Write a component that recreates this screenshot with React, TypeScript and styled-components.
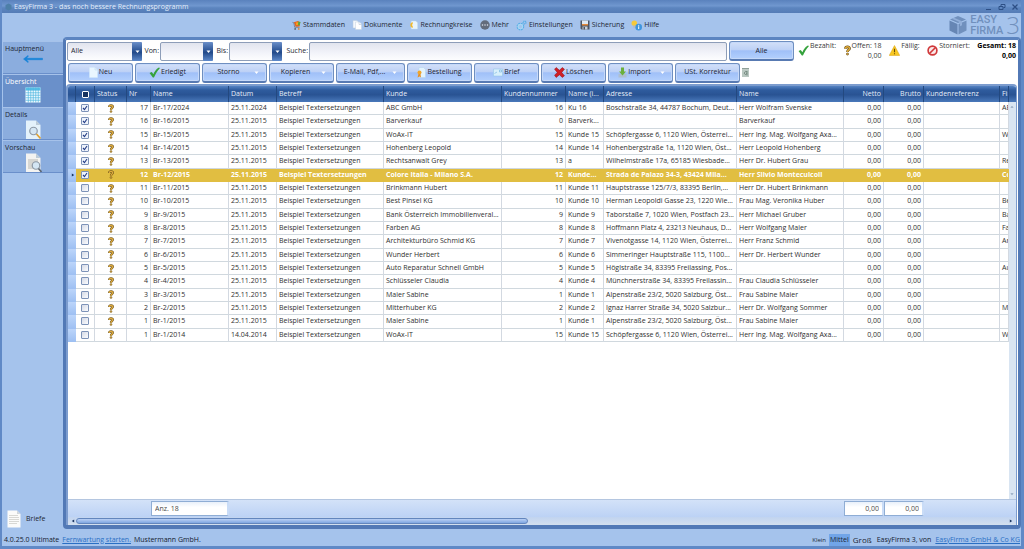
import React, { useState } from "react";
import styled, { createGlobalStyle, css } from "styled-components";

const GlobalStyle = createGlobalStyle`
  *, *::before, *::after { box-sizing: border-box; }
  body { margin: 0; }
  body, button, input, select {
    font-family: "Open Sans", "Noto Sans", sans-serif;
    font-size: 7px;
    line-height: 10px;
    color: #1d2733;
  }
`;

const Frame = styled.div`
  min-height: 100vh;
  display: flex;
  flex-direction: column;
  background: #a5c3ec;
  border: solid #6089c6;
  border-width: 0 3px 3px 2px;
`;

const TitleBar = styled.header`
  height: 13px;
  display: flex;
  align-items: center;
  justify-content: space-between;
  padding: 0 2px 0 3px;
  color: #e3edfa;
  background: linear-gradient(#5a82bd, #7097cf 45%, #5c85bf 60%, #557cb6);
`;

const TitleText = styled.div`
  display: flex;
  align-items: center;
  gap: 2px;
`;

const WindowButtons = styled.div`
  display: flex;
  gap: 5px;
`;

const WindowButton = styled.button`
  width: 8px;
  height: 8px;
  padding: 0;
  border: 0;
  background: none;
  display: flex;
`;

const Header = styled.div`
  height: 24px;
  display: flex;
  align-items: center;
`;

const Nav = styled.nav`
  flex: 1;
  display: flex;
  justify-content: center;
  gap: 7px;
`;

const NavLink = styled.a`
  display: flex;
  align-items: center;
  gap: 2px;
  color: inherit;
  text-decoration: none;
`;

const Brand = styled.div`
  display: flex;
  align-items: center;
  gap: 3px;
  padding-right: 1px;
  color: #7090bd;
  font-family: Roboto, sans-serif;
  font-weight: 500;
  font-size: 11px;
  line-height: 11px;
`;

const BrandNumber = styled.span`
  font-family: "Open Sans", sans-serif;
  font-weight: 300;
  font-size: 24px;
  line-height: 22px;
`;

const Body = styled.div`
  flex: 1;
  display: flex;
`;

const Sidebar = styled.aside`
  width: 61px;
  padding: 4px 0 0 1px;
  display: flex;
  flex-direction: column;
`;

const SideTab = styled.button<{ $active?: boolean }>`
  height: 33px;
  padding: 2px 2px 0;
  border: 0;
  border-bottom: 1px solid #6a8fca;
  border-top: 1px solid #a6c2ea;
  background: ${(p) => (p.$active ? "#6a90ca" : "#8badde")};
  color: ${(p) => (p.$active ? "#ffffff" : "#1d2733")};
  text-align: left;
  display: flex;
  flex-direction: column;
  svg { align-self: center; flex: none; }
`;

const LettersButton = styled.button`
  margin-top: auto;
  height: 20px;
  padding: 0 4px;
  border: 0;
  background: none;
  display: flex;
  align-items: center;
  gap: 5px;
`;

const Panel = styled.main`
  flex: 1;
  min-width: 0;
  display: flex;
  flex-direction: column;
  background: #fff;
  border: 3px solid #5279b6;
  border-top-color: #5c85c1;
  border-bottom-width: 4px;
  border-radius: 4px;
`;

const FilterRow = styled.div`
  display: flex;
  align-items: center;
  height: 22px;
  padding: 1px 2px 1px 1px;
`;

const field = css`
  height: 19px;
  border: 1px solid #8d9db8;
  border-radius: 2px;
  background: linear-gradient(#e1e4ee, #f3f4fa 60%, #fdfdfe);
  padding: 0 3px;
  outline: none;
`;

const Combo = styled.div<{ $w: number }>`
  position: relative;
  display: flex;
  width: ${(p) => p.$w}px;
  flex: none;
`;

const ComboSelect = styled.select`
  ${field}
  appearance: none;
  width: 100%;
  padding-right: 12px;
`;

const ComboInput = styled.input`
  ${field}
  width: 100%;
  padding-right: 12px;
`;

const ComboArrow = styled.span`
  position: absolute;
  right: 0;
  top: 0;
  width: 10px;
  height: 19px;
  display: flex;
  align-items: center;
  justify-content: center;
  pointer-events: none;
  border-radius: 1px;
  background: linear-gradient(#6b8fc9, #2d5596 45%, #234a8a 55%, #5f8acb);
`;

const FieldLabel = styled.label<{ $w: number }>`
  width: ${(p) => p.$w}px;
  flex: none;
  text-align: right;
  padding-right: 1px;
`;

const SearchInput = styled.input`
  ${field}
  flex: 1;
  min-width: 40px;
  margin-right: 2px;
`;

const GlossButton = styled.button<{ $w?: number }>`
  width: ${(p) => p.$w ?? 65}px;
  height: 20px;
  flex: none;
  padding: 0;
  border: 1px solid #6f8fc0;
  border-bottom: 2px solid #587ab2;
  border-radius: 3px;
  background: linear-gradient(#d3e0f8, #bdd1f6 45%, #a0c0f8 52%, #b3d0fd);
  box-shadow: inset 0 0 0 1px #c6d9f9;
  display: flex;
  align-items: center;
  color: #1a2433;
`;

const ButtonContent = styled.span`
  flex: 1;
  display: flex;
  align-items: center;
  justify-content: center;
  gap: 1px;
  white-space: nowrap;
`;

const Caret = styled.span`
  width: 12px;
  display: flex;
`;

const Stats = styled.div`
  display: flex;
  flex: none;
  width: 222px;
  padding-left: 4px;
  justify-content: space-between;
`;

const Stat = styled.div<{ $bold?: boolean }>`
  display: flex;
  gap: 1px;
  text-align: right;
  font-weight: ${(p) => (p.$bold ? 700 : 400)};
  color: ${(p) => (p.$bold ? "#000" : "#3b3b3b")};
  svg { margin-top: 4px; }
`;

const StatLines = styled.span`
  display: flex;
  flex-direction: column;
  min-height: 20px;
  white-space: nowrap;
`;

const Toolbar = styled.div`
  display: flex;
  align-items: center;
  gap: 2px;
  height: 22px;
  padding: 0 2px 1px;
`;

const IconButton = styled.button`
  padding: 0;
  border: 0;
  background: none;
  display: flex;
`;

const GridFrame = styled.section`
  flex: 1;
  margin-right: 1px;
  display: flex;
  flex-direction: column;
  border: solid #7c9cce;
  border-width: 2px 1px 0 2px;
  border-radius: 4px 4px 0 0;
  overflow: hidden;
`;

const GridBody = styled.div`
  flex: 1;
  display: flex;
  align-items: stretch;
`;

const TableArea = styled.div`
  flex: 1;
  min-width: 0;
  overflow: hidden;
`;

const headFill = css`
  background: linear-gradient(#5583c2, #2f5c9e 25%, #295393 55%, #4a79bb);
`;

const Table = styled.table`
  width: 100%;
  height: 256px;
  table-layout: fixed;
  border-collapse: separate;
  border-spacing: 0;
`;

const Th = styled.th<{ $right?: boolean }>`
  ${headFill}
  height: 16px;
  padding: 0 2px;
  color: #e6eefa;
  font-weight: 400;
  text-align: ${(p) => (p.$right ? "right" : "left")};
  white-space: nowrap;
  overflow: hidden;
  border-right: 1px solid #234980;
`;

const HeadCheckCell = styled.span`
  display: flex;
  justify-content: center;
`;

const Td = styled.td<{ $right?: boolean }>`
  padding: 0 2px;
  text-align: ${(p) => (p.$right ? "right" : "left")};
  white-space: nowrap;
  overflow: hidden;
  border-right: 1px solid #d3d9e1;
  border-bottom: 1px solid #d0d8de;
`;

const IconCell = styled(Td)`
  text-align: center;
  line-height: 0;
  svg { vertical-align: middle; }
`;

const MarkCell = styled.td`
  padding: 0 0 0 3px;
  line-height: 0;
  background: linear-gradient(#bcd5fa, #9dbff2);
`;

const Row = styled.tr<{ $selected?: boolean }>`
  color: #2f2f2f;
  ${(p) =>
    p.$selected &&
    css`
      color: #fff;
      font-weight: 700;
      ${Td} {
        background: #e1be41;
        border-color: #e1be41;
      }
    `}
`;

const Check = styled.input`
  appearance: none;
  width: 8px;
  height: 8px;
  margin: 0;
  vertical-align: middle;
  border: 1px solid #7d93b8;
  border-radius: 1px;
  background: linear-gradient(135deg, #d5dae6, #fbfcfe);
  &:checked {
    background: #eef3fb
      url("data:image/svg+xml,%3Csvg xmlns='http://www.w3.org/2000/svg' viewBox='0 0 6 6'%3E%3Cpath d='M1 3l1.5 1.6L5 1' fill='none' stroke='%23263f86' stroke-width='1.1'/%3E%3C/svg%3E")
      center / 6px 6px no-repeat;
  }
`;

const HeadCheck = styled(Check)`
  width: 7px;
  height: 7px;
  border: 1px solid #fff;
  background: #16325f;
`;

const VScroll = styled.div`
  width: 7px;
  flex: none;
  display: flex;
  flex-direction: column;
  justify-content: space-between;
  background: #d9e5f2;
  svg { display: block; margin: 3px 0 3px 1px; }
`;

const VScrollCap = styled.div`
  ${headFill}
  height: 16px;
`;

const VScrollTrack = styled.div`
  flex: 1;
  display: flex;
  flex-direction: column;
  justify-content: space-between;
`;

const Summary = styled.div`
  height: 18px;
  display: grid;
  grid-template-columns: 83px 78px 615px 40px 40px;
  align-items: center;
  background: linear-gradient(#d3e2f8, #bcd2f5);
  border-top: 1px solid #b4c6e0;
`;

const SummaryField = styled.input<{ $col: number; $right?: boolean }>`
  grid-column: ${(p) => p.$col};
  min-width: 0;
  width: 100%;
  height: 15px;
  padding: 0 3px;
  border: 1px solid #8fadd4;
  border-right-width: 2px;
  border-right-color: #c9dcf7;
  background: linear-gradient(#e9f0fa, #fff 40%);
  text-align: ${(p) => (p.$right ? "right" : "left")};
  color: #4a4a4a;
`;

const HScroll = styled.div`
  height: 8px;
  display: flex;
  align-items: center;
  padding: 0 3px;
  gap: 1px;
  background: linear-gradient(#c1d4f0, #d3dfee);
`;

const HThumb = styled.div`
  width: 48%;
  height: 6px;
  border: 1px solid #6386bd;
  border-radius: 3px;
  background: linear-gradient(#b9d0f5, #7fa6e0);
`;

const PushRight = styled.span`
  margin-left: auto;
  display: flex;
`;

const StatusBar = styled.footer`
  height: 17px;
  display: flex;
  align-items: center;
  justify-content: space-between;
  padding: 4px 1px 0 2px;
  color: #14202f;
`;

const StatusGroup = styled.div<{ $gap: number }>`
  display: flex;
  align-items: center;
  gap: ${(p) => p.$gap}px;
`;

const StatusLink = styled.a`
  color: #2a6fc4;
`;

const SizeButton = styled.button<{ $size: number; $on?: boolean }>`
  padding: 0 1px;
  height: 12px;
  border: 0;
  font-size: ${(p) => p.$size}px;
  background: ${(p) => (p.$on ? "#71a5e8" : "transparent")};
`;

const Product = styled.span`
  margin: 0 2px;
`;

const Svg = ({ w = 10, h = 10, box = "0 0 20 20", children }: { w?: number; h?: number; box?: string; children: React.ReactNode }) => (
  <svg width={w} height={h} viewBox={box} fill="none" aria-hidden="true">
    {children}
  </svg>
);

const Triangle = ({ dir = "down", color = "#fff", size = 5 }: { dir?: "down" | "up" | "left" | "right"; color?: string; size?: number }) => {
  const d = { down: "M1 3h8L5 8z", up: "M1 7h8L5 2z", left: "M8 1v8L2 5z", right: "M2 1v8l6-4z" }[dir];
  return (
    <Svg w={size} h={size} box="0 0 10 10">
      <path d={d} fill={color} />
    </Svg>
  );
};

const CartIcon = () => (
  <Svg w={9} h={11}>
    <path d="M4 3l9-3 5 3-1 9-9 1z" fill="#e8641c" />
    <path d="M9 3h6v6H9z" fill="#f4a321" />
    <path d="M14 1l5 1-2 8-4-1z" fill="#57a63a" />
    <path d="M1 3l3 1 2 10h11" stroke="#6b7078" strokeWidth="1.6" />
    <circle cx="7" cy="17.500" r="2" fill="#555d68" />
    <circle cx="15" cy="17.500" r="2" fill="#e2882c" />
  </Svg>
);

const DocsIcon = () => (
  <Svg>
    <path d="M2 1h8l3 3v12H2z" fill="#f4f8fc" stroke="#b9cadd" />
    <path d="M7 4h8l4 4v11H7z" fill="#fff" stroke="#c3d0df" />
    <path d="M14 4v5h5" stroke="#a8b9cd" />
  </Svg>
);

const CirclesIcon = () => (
  <Svg w={9}>
    <path d="M5 1h10l4 4v14H5z" fill="#e8f4fc" stroke="#c3dcee" />
    <path d="M9 4a6 6 0 100 12l-1-4a2.500 2.500 0 010-4z" fill="#f2b92d" />
  </Svg>
);

const MoreIcon = () => (
  <Svg>
    <circle cx="10" cy="10" r="9.500" fill="#636c7c" />
    <circle cx="5" cy="10" r="1.500" fill="#dfe6f0" />
    <circle cx="10" cy="10" r="1.500" fill="#dfe6f0" />
    <circle cx="15" cy="10" r="1.500" fill="#dfe6f0" />
  </Svg>
);

const GearsIcon = () => (
  <Svg w={11} h={11}>
    <circle cx="8" cy="12" r="5.500" stroke="#58aee6" strokeWidth="3" strokeDasharray="3 1.300" />
    <circle cx="8" cy="12" r="4" stroke="#a5d8f5" strokeWidth="2" />
    <circle cx="15.500" cy="4.500" r="2.500" stroke="#58aee6" strokeWidth="2.500" strokeDasharray="2 .8" />
  </Svg>
);

const DiskIcon = () => (
  <Svg>
    <path d="M1 1h18v18H3l-2-2z" fill="#4d5560" />
    <path d="M4 1h12v8H4z" fill="#dfe8f1" />
    <path d="M4 8h12v3H4z" fill="#e58a3a" />
    <path d="M5 13h10v6H5z" fill="#c9d0d8" />
    <path d="M7 14h3v5H7z" fill="#4d5560" />
  </Svg>
);

const HelpIcon = () => (
  <Svg w={11} h={11}>
    <circle cx="6" cy="6" r="5" fill="#f5c93a" />
    <path d="M4 10h4v4H4z" fill="#b5b9bf" />
    <circle cx="14" cy="13" r="6" fill="#3e95de" />
    <path d="M14 11.500v5M14 9v1.500" stroke="#fff" strokeWidth="1.800" />
  </Svg>
);

const CubeIcon = () => (
  <Svg w={18} h={19} box="0 0 36 38">
    <path d="M18 0l16 7-16 7L2 7z" fill="#7090bd" />
    <path d="M1 9l16 7v21L1 29z" fill="#6686b4" />
    <path d="M35 9l-16 7v21l16-8z" fill="#7090bd" />
    <path d="M10 3.500l16 7v8l-4 2v-8L6 5.500z" fill="#92afd9" />
  </Svg>
);

const ArrowIcon = () => (
  <Svg w={20} h={10} box="0 0 40 20">
    <path d="M1 10l9-7 1 1-4 4.500h32v3H7l4 4.500-1 1z" fill="#1583d8" stroke="#1583d8" />
  </Svg>
);

const TableIcon = () => (
  <Svg w={16} h={16} box="0 0 32 32">
    <path d="M1 1h30v30H1z" fill="#f3fcff" />
    <path d="M1 1h30v5H1z" fill="#57bfe6" />
    <path d="M1 6.500h30M1 11.500h30M1 16.500h30M1 21.500h30M1 26.500h30M6.500 1v30M11.500 1v30M16.500 1v30M21.500 1v30M26.500 1v30" stroke="#4fb6e0" strokeWidth="1.400" />
  </Svg>
);

const PageSearch = ({ lines }: { lines?: boolean }) => (
  <Svg w={17} h={20} box="0 0 34 40">
    <path d="M2 1h20l9 9v28H2z" fill={lines ? "#f3f3f1" : "#e4f2fb"} />
    <path d="M22 1v9h9z" fill="#bccbd8" />
    {lines && <path d="M6 14h20M6 18h20M6 22h12M6 26h10M6 30h12" stroke="#a9a9a6" strokeWidth="1.600" />}
    <circle cx={lines ? 22 : 17} cy={lines ? 25 : 22} r="7.500" fill="#d4e6f4" stroke="#8d99a6" strokeWidth="2.400" />
    <path d={lines ? "M27 31l6 7" : "M23 28l8 9"} stroke={lines ? "#5d6670" : "#e0a030"} strokeWidth="3.400" />
  </Svg>
);

const LetterIcon = () => (
  <Svg w={14} h={18} box="0 0 28 36">
    <path d="M1 1h19l7 7v27H1z" fill="#fbfbfa" />
    <path d="M20 1v7h7z" fill="#d0d6dc" />
    <path d="M4 11h18M4 15h20M4 19h20M4 23h20M4 27h16" stroke="#cfcfca" strokeWidth="1.600" />
  </Svg>
);

const NewIcon = () => (
  <Svg w={9} h={11} box="0 0 18 22">
    <path d="M1 1h11l5 5v15H1z" fill="#e9f6ff" stroke="#d3eafa" />
    <path d="M12 1v5h5" stroke="#b5d4ea" />
  </Svg>
);

const TickIcon = ({ size = 11 }: { size?: number }) => (
  <Svg w={size} h={size}>
    <path d="M1 11l4-2 3 4c2-5 5-9 10-12l2 1c-5 5-8 11-11 17H7z" fill="#35a23c" />
  </Svg>
);

const OrderIcon = () => (
  <Svg w={9} h={11} box="0 0 18 22">
    <path d="M4 1h9l4 4v16H4z" fill="#e3f3fd" stroke="#b2d5ec" />
    <circle cx="5" cy="11" r="4" fill="#f0a62c" />
    <path d="M3 14l-2 7 4-2 3 2-1-7z" fill="#e3902a" />
  </Svg>
);

const MailIcon = () => (
  <Svg w={10} h={9} box="0 0 20 18">
    <path d="M1 2h18v14H1z" fill="#d8effb" stroke="#8fc3e6" />
    <path d="M3 11l5-3M13 4h4v4h-4z" stroke="#5fa6d8" />
  </Svg>
);

const CrossIcon = () => (
  <Svg w={11} h={11}>
    <path d="M4 1l6 5 5-5 4 3-5 6 5 6-4 3-5-5-6 5-3-4 5-5-5-6z" fill="#d01f26" stroke="#93151b" />
  </Svg>
);

const ImportIcon = () => (
  <Svg w={9} h={11} box="0 0 18 22">
    <path d="M1 14h16v7H1z" fill="#aebfd0" />
    <path d="M6 1h6v8h4l-7 8-7-8h4z" fill="#6bb03c" />
  </Svg>
);

const TrashIcon = () => (
  <Svg w={7} h={9} box="0 0 14 18">
    <path d="M0 0h14v3H0z" fill="#8f9f98" />
    <path d="M0 3h14v15H0z" fill="#b9c8c1" />
    <path d="M10 15V6M10 8a3 3 0 10-3 5l3-2" stroke="#5f766b" strokeWidth="1.500" />
  </Svg>
);

const QuestionIcon = ({ w = 6, h = 9 }: { w?: number; h?: number }) => (
  <Svg w={w} h={h} box="0 0 14 20">
    <path d="M3 6.500C3 1.500 11.500 1.500 11 6c-.4 3-4 2.600-4 7" stroke="#6b5019" strokeWidth="5.400" />
    <path d="M3 6.500C3 1.500 11.500 1.500 11 6c-.4 3-4 2.600-4 7" stroke="#dfac3c" strokeWidth="3" />
    <circle cx="7" cy="17" r="2.200" fill="#dfac3c" stroke="#6b5019" strokeWidth="1.300" />
  </Svg>
);

const WarningIcon = () => (
  <Svg w={11} h={11}>
    <path d="M10 1l9.500 18H.5z" fill="#f8c822" stroke="#dba514" />
    <path d="M10 7v6M10 15v2" stroke="#6b4b05" strokeWidth="2" />
  </Svg>
);

const ForbiddenIcon = () => (
  <Svg w={11} h={11}>
    <circle cx="10" cy="10" r="8" fill="#fbe9e8" stroke="#d0393b" strokeWidth="3" />
    <path d="M4.500 15.500l11-11" stroke="#d0393b" strokeWidth="3" />
  </Svg>
);

const navItems: [string, React.ReactNode][] = [
  ["Stammdaten", <CartIcon />],
  ["Dokumente", <DocsIcon />],
  ["Rechnungkreise", <CirclesIcon />],
  ["Mehr", <MoreIcon />],
  ["Einstellungen", <GearsIcon />],
  ["Sicherung", <DiskIcon />],
  ["Hilfe", <HelpIcon />],
];

const tools: { label: string; icon?: React.ReactNode; menu?: boolean; w?: number }[] = [
  { label: "Neu", icon: <NewIcon /> },
  { label: "Erledigt", icon: <TickIcon /> },
  { label: "Storno", menu: true },
  { label: "Kopieren", menu: true },
  { label: "E-Mail, Pdf,...", menu: true, w: 69 },
  { label: "Bestellung", icon: <OrderIcon /> },
  { label: "Brief", icon: <MailIcon /> },
  { label: "Löschen", icon: <CrossIcon /> },
  { label: "Import", icon: <ImportIcon />, menu: true },
  { label: "USt. Korrektur" },
];

const columns: { label: string; w?: number; right?: boolean }[] = [
  { label: "Nr", w: 24 },
  { label: "Name", w: 78 },
  { label: "Datum", w: 48 },
  { label: "Betreff", w: 107 },
  { label: "Kunde", w: 118 },
  { label: "Kundennummer", w: 64 },
  { label: "Name (i...", w: 38 },
  { label: "Adresse", w: 133 },
  { label: "Name", w: 107 },
  { label: "Netto", w: 40, right: true },
  { label: "Brutto", w: 40, right: true },
  { label: "Kundenreferenz", w: 76 },
  { label: "Fir" },
];

type Invoice = [nr: number, name: string, date: string, customer: string, no: number, short: string, address: string, contact: string, company: string];

const invoices: Invoice[] = [
  [17, "Br-17/2024", "25.11.2024", "ABC GmbH", 16, "Ku 16", "Boschstraße 34, 44787 Bochum, Deut...", "Herr Wolfram Svenske", "AB"],
  [16, "Br-16/2015", "25.11.2015", "Barverkauf", 0, "Barverk...", "", "Barverkauf", ""],
  [15, "Br-15/2015", "25.11.2015", "WoAx-IT", 15, "Kunde 15", "Schöpfergasse 6, 1120 Wien, Österrei...", "Herr Ing. Mag. Wolfgang Axa...", "W"],
  [14, "Br-14/2015", "25.11.2015", "Hohenberg Leopold", 14, "Kunde 14", "Hohenbergstraße 1a, 1120 Wien, Öst...", "Herr Leopold Hohenberg", ""],
  [13, "Br-13/2015", "25.11.2015", "Rechtsanwalt Grey", 13, "a", "Wilhelmstraße 17a, 65185 Wiesbade...", "Herr Dr. Hubert Grau", "Re"],
  [12, "Br-12/2015", "25.11.2015", "Colore Italia - Milano S.A.", 12, "Kunde...", "Strada de Palazo 34-3, 43424 Mila...", "Herr Silvio Monteculcoli", "Co"],
  [11, "Br-11/2015", "25.11.2015", "Brinkmann Hubert", 11, "Kunde 11", "Hauptstrasse 125/7/3, 83395 Berlin,...", "Herr Dr. Hubert Brinkmann", ""],
  [10, "Br-10/2015", "25.11.2015", "Best Pinsel KG", 10, "Kunde 10", "Herman Leopoldi Gasse 23, 1220 Wie...", "Frau Mag. Veronika Huber", "Be"],
  [9, "Br-9/2015", "25.11.2015", "Bank Österreich Immobilienveral...", 9, "Kunde 9", "Taborstaße 7, 1020 Wien, Postfach 23...", "Herr Michael Gruber", "Ba"],
  [8, "Br-8/2015", "25.11.2015", "Farben AG", 8, "Kunde 8", "Hoffmann Platz 4, 23213 Neuhaus, D...", "Herr Wolfgang Maier", "Fa"],
  [7, "Br-7/2015", "25.11.2015", "Architekturbüro Schmid KG", 7, "Kunde 7", "Vivenotgasse 14, 1120 Wien, Österrei...", "Herr Franz Schmid", "Ar"],
  [6, "Br-6/2015", "25.11.2015", "Wunder Herbert", 6, "Kunde 6", "Simmeringer Hauptstraße 115, 1100...", "Herr Dr. Herbert Wunder", ""],
  [5, "Br-5/2015", "25.11.2015", "Auto Reparatur Schnell GmbH", 5, "Kunde 5", "Höglstraße 34, 83395 Freilassing, Pos...", "", "Au"],
  [4, "Br-4/2015", "25.11.2015", "Schlüsseler Claudia", 4, "Kunde 4", "Münchnerstraße 34, 83395 Freilassin...", "Frau Claudia Schlüsseler", ""],
  [3, "Br-3/2015", "25.11.2015", "Maier Sabine", 1, "Kunde 1", "Alpenstraße 23/2, 5020 Salzburg, Öst...", "Frau Sabine Maier", ""],
  [2, "Br-2/2015", "25.11.2015", "Mitterhuber KG", 2, "Kunde 2", "Ignaz Harrer Straße 34, 5020 Salzbur...", "Herr Dr. Wolfgang Sommer", "M"],
  [1, "Br-1/2015", "25.11.2015", "Maier Sabine", 1, "Kunde 1", "Alpenstraße 23/2, 5020 Salzburg, Öst...", "Frau Sabine Maier", ""],
  [1, "Br-1/2014", "14.04.2014", "WoAx-IT", 15, "Kunde 15", "Schöpfergasse 6, 1120 Wien, Österrei...", "Herr Ing. Mag. Wolfgang Axa...", "W"],
];

const sizes: [string, number][] = [
  ["Klein", 6],
  ["Mittel", 7],
  ["Groß", 8],
];

function InvoiceTable() {
  const [selected, setSelected] = useState(5);
  return (
    <Table>
      <colgroup>
        <col width={8} />
        <col width={19} />
        <col width={32} />
        {columns.map((c, i) => (
          <col key={i} width={c.w} />
        ))}
      </colgroup>
      <thead>
        <tr>
          <Th />
          <Th>
            <HeadCheckCell>
              <HeadCheck type="checkbox" aria-label="Alle auswählen" />
            </HeadCheckCell>
          </Th>
          <Th>Status</Th>
          {columns.map((c, i) => (
            <Th key={i} $right={c.right}>
              {c.label}
            </Th>
          ))}
        </tr>
      </thead>
      <tbody>
        {invoices.map(([nr, name, date, customer, no, short, address, contact, company], i) => (
          <Row key={name} $selected={i === selected} onClick={() => setSelected(i)}>
            <MarkCell>{i === selected && <Triangle dir="right" color="#16325f" size={4} />}</MarkCell>
            <IconCell>
              <Check type="checkbox" defaultChecked={i < 6} aria-label={name} />
            </IconCell>
            <IconCell>
              <QuestionIcon />
            </IconCell>
            <Td $right>{nr}</Td>
            <Td>{name}</Td>
            <Td>{date}</Td>
            <Td>Beispiel Textersetzungen</Td>
            <Td>{customer}</Td>
            <Td $right>{no}</Td>
            <Td>{short}</Td>
            <Td>{address}</Td>
            <Td>{contact}</Td>
            <Td $right>0,00</Td>
            <Td $right>0,00</Td>
            <Td />
            <Td>{company}</Td>
          </Row>
        ))}
      </tbody>
    </Table>
  );
}

export default function App() {
  const [size, setSize] = useState("Mittel");
  return (
    <Frame>
      <GlobalStyle />
      <TitleBar>
        <TitleText>
          <Svg w={7} h={8} box="0 0 14 16">
            <path d="M7 1l6 3v8l-6 3-6-3V4z" fill="#4d7fa8" />
          </Svg>
          EasyFirma 3 - das noch bessere Rechnungsprogramm
        </TitleText>
        <WindowButtons>
          <WindowButton aria-label="Minimieren">
            <Svg w={8} h={8} box="0 0 8 8"><path d="M1 6.500h5" stroke="#2d4f85" /></Svg>
          </WindowButton>
          <WindowButton aria-label="Wiederherstellen">
            <Svg w={8} h={8} box="0 0 8 8"><path d="M1 3.500h4v3H1zM3 3V1.500h4v3H5.500" stroke="#2d4f85" /></Svg>
          </WindowButton>
          <WindowButton aria-label="Schließen">
            <Svg w={8} h={8} box="0 0 8 8"><path d="M1.500 1.500l5 5M6.500 1.500l-5 5" stroke="#2d4f85" strokeWidth="1.300" /></Svg>
          </WindowButton>
        </WindowButtons>
      </TitleBar>

      <Header>
        <Nav>
          {navItems.map(([label, icon]) => (
            <NavLink key={label} href="#">
              {icon}
              {label}
            </NavLink>
          ))}
        </Nav>
        <Brand>
          <CubeIcon />
          <span>
            EASY
            <br />
            FIRMA
          </span>
          <BrandNumber>3</BrandNumber>
        </Brand>
      </Header>

      <Body>
        <Sidebar>
          <SideTab>Hauptmenü<ArrowIcon /></SideTab>
          <SideTab $active>Übersicht<TableIcon /></SideTab>
          <SideTab>Details<PageSearch /></SideTab>
          <SideTab>Vorschau<PageSearch lines /></SideTab>
          <LettersButton>
            <LetterIcon />
            Briefe
          </LettersButton>
        </Sidebar>

        <Panel>
          <FilterRow>
            <Combo $w={75}>
              <ComboSelect aria-label="Filter" defaultValue="Alle">
                <option>Alle</option>
              </ComboSelect>
              <ComboArrow><Triangle /></ComboArrow>
            </Combo>
            <FieldLabel $w={18} htmlFor="from">Von:</FieldLabel>
            <Combo $w={53}>
              <ComboInput id="from" />
              <ComboArrow><Triangle /></ComboArrow>
            </Combo>
            <FieldLabel $w={16} htmlFor="to">Bis:</FieldLabel>
            <Combo $w={53}>
              <ComboInput id="to" />
              <ComboArrow><Triangle /></ComboArrow>
            </Combo>
            <FieldLabel $w={27} htmlFor="search">Suche:</FieldLabel>
            <SearchInput id="search" />
            <GlossButton><ButtonContent>Alle</ButtonContent></GlossButton>
            <Stats>
              <Stat><TickIcon /><StatLines><span>Bezahlt:</span></StatLines></Stat>
              <Stat><QuestionIcon w={7} h={11} /><StatLines><span>Offen: 18</span><span>0,00</span></StatLines></Stat>
              <Stat><WarningIcon /><StatLines><span>Fällig:</span></StatLines></Stat>
              <Stat><ForbiddenIcon /><StatLines><span>Storniert:</span></StatLines></Stat>
              <Stat $bold><StatLines><span>Gesamt: 18</span><span>0,00</span></StatLines></Stat>
            </Stats>
          </FilterRow>

          <Toolbar>
            {tools.map((t) => (
              <GlossButton key={t.label} $w={t.w}>
                <ButtonContent>
                  {t.icon}
                  {t.label}
                </ButtonContent>
                {t.menu && <Caret><Triangle /></Caret>}
              </GlossButton>
            ))}
            <IconButton aria-label="Papierkorb"><TrashIcon /></IconButton>
          </Toolbar>

          <GridFrame>
            <GridBody>
              <TableArea>
                <InvoiceTable />
              </TableArea>
              <VScroll>
                <VScrollCap />
                <VScrollTrack>
                  <Triangle dir="up" color="#8fa3bd" size={4} />
                  <Triangle dir="down" color="#8fa3bd" size={4} />
                </VScrollTrack>
              </VScroll>
            </GridBody>
            <Summary>
              <SummaryField $col={2} readOnly value="Anz. 18" aria-label="Anzahl" />
              <SummaryField $col={4} $right readOnly value="0,00" aria-label="Summe Netto" />
              <SummaryField $col={5} $right readOnly value="0,00" aria-label="Summe Brutto" />
            </Summary>
            <HScroll>
              <Triangle dir="left" color="#16325f" size={4} />
              <HThumb />
              <PushRight><Triangle dir="right" color="#16325f" size={4} /></PushRight>
            </HScroll>
          </GridFrame>
        </Panel>
      </Body>

      <StatusBar>
        <StatusGroup $gap={3}>
          <span>4.0.25.0 Ultimate</span>
          <StatusLink href="#">Fernwartung starten.</StatusLink>
          <span>Mustermann GmbH.</span>
        </StatusGroup>
        <StatusGroup $gap={2}>
          {sizes.map(([label, px]) => (
            <SizeButton key={label} $size={px} $on={label === size} onClick={() => setSize(label)}>
              {label}
            </SizeButton>
          ))}
          <Product>EasyFirma 3, von</Product>
          <StatusLink href="#">EasyFirma GmbH &amp; Co KG</StatusLink>
        </StatusGroup>
      </StatusBar>
    </Frame>
  );
}
